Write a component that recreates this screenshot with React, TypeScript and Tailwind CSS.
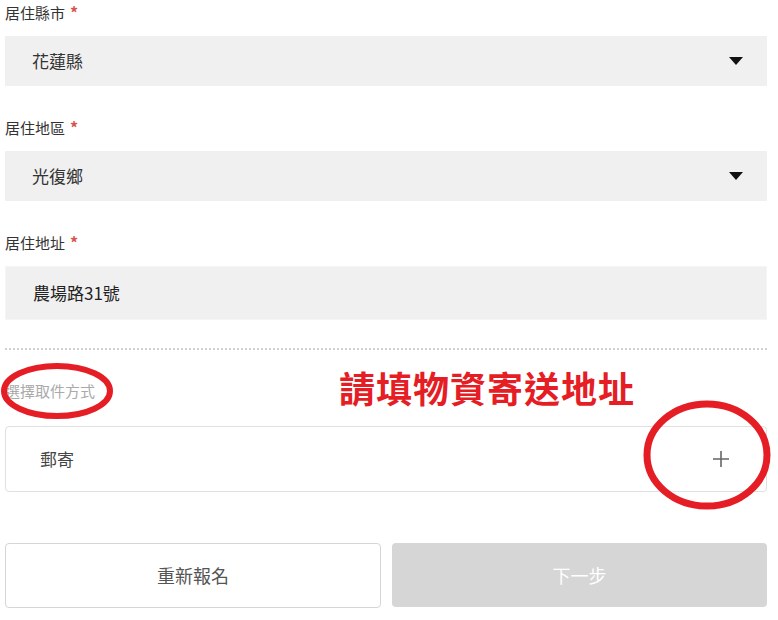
import React from "react";

const font = { fontFamily: '"Noto Sans CJK TC", "Noto Sans", sans-serif' };

function Label({ text, star = true }: { text: string; star?: boolean }) {
  return (
    <div className="h-[20px] flex items-center text-[15px] text-[#333] leading-none">
      <span>{text}</span>
      {star && <span className="ml-[5px] text-[#d9534f] text-[16px] font-bold">*</span>}
    </div>
  );
}

function Caret() {
  return (
    <svg width="14" height="8" viewBox="0 0 14 8" className="block">
      <path d="M0 0 L14 0 L7 8 Z" fill="#111" />
    </svg>
  );
}

export default function App() {
  return (
    <div className="relative w-[778px] h-[620px] bg-white overflow-hidden" style={font}>
      <div className="ml-[5px] w-[762px] pt-[2px]">
        <Label text="居住縣市" />
        <div className="mt-[14px] h-[50px] bg-[#f0f0f0] flex items-center justify-between pl-[27px] pr-[24px] text-[17px] text-[#333]">
          <span>花蓮縣</span>
          <Caret />
        </div>

        <div className="mt-[31px]">
          <Label text="居住地區" />
        </div>
        <div className="mt-[14px] h-[50px] bg-[#f0f0f0] flex items-center justify-between pl-[27px] pr-[24px] text-[17px] text-[#333]">
          <span>光復鄉</span>
          <Caret />
        </div>

        <div className="mt-[31px]">
          <Label text="居住地址" />
        </div>
        <div className="mt-[14px] h-[54px] bg-[#f0f0f0] border border-[#f5f5f5] flex items-center pl-[27px] text-[17px] text-[#222]">
          <span>農場路31號</span>
        </div>

        <div className="mt-[28px] border-t-2 border-dotted border-[#d0d0d0]" />

        <div className="mt-[30px] h-[20px] flex items-center text-[15px] text-[#aaa] leading-none">
          選擇取件方式
        </div>

        <div className="mt-[26px] h-[66px] border border-[#e0e0e0] rounded-[4px] flex items-center justify-between pl-[34px] pr-[36px] text-[17px] text-[#444]">
          <span>郵寄</span>
          <svg width="18" height="18" viewBox="0 0 18 18" className="block">
            <path d="M9 1 V17 M1 9 H17" stroke="#666" strokeWidth="1.6" />
          </svg>
        </div>

        <div className="mt-[51px] flex gap-[11px]">
          <button className="w-[376px] h-[65px] border border-[#d5d5d5] rounded-[4px] bg-white text-[18px] text-[#555]">
            重新報名
          </button>
          <button className="w-[375px] h-[64px] rounded-[4px] bg-[#d6d6d6] text-[18px] text-white">
            下一步
          </button>
        </div>
      </div>

      {/* red annotations */}
      <div className="absolute left-[339px] top-[369px] text-[36px] font-bold text-[#e51d25] tracking-[1px] leading-none whitespace-nowrap">
        請填物資寄送地址
      </div>
      <svg className="absolute left-0 top-[360px]" width="118" height="62" viewBox="0 0 118 62">
        <ellipse cx="57" cy="31" rx="53" ry="25" fill="none" stroke="#e51d25" strokeWidth="6" />
      </svg>
      <svg className="absolute left-[640px] top-[398px]" width="136" height="116" viewBox="0 0 136 116">
        <ellipse cx="67" cy="57" rx="60" ry="51" fill="none" stroke="#e51d25" strokeWidth="7" />
      </svg>
    </div>
  );
}
